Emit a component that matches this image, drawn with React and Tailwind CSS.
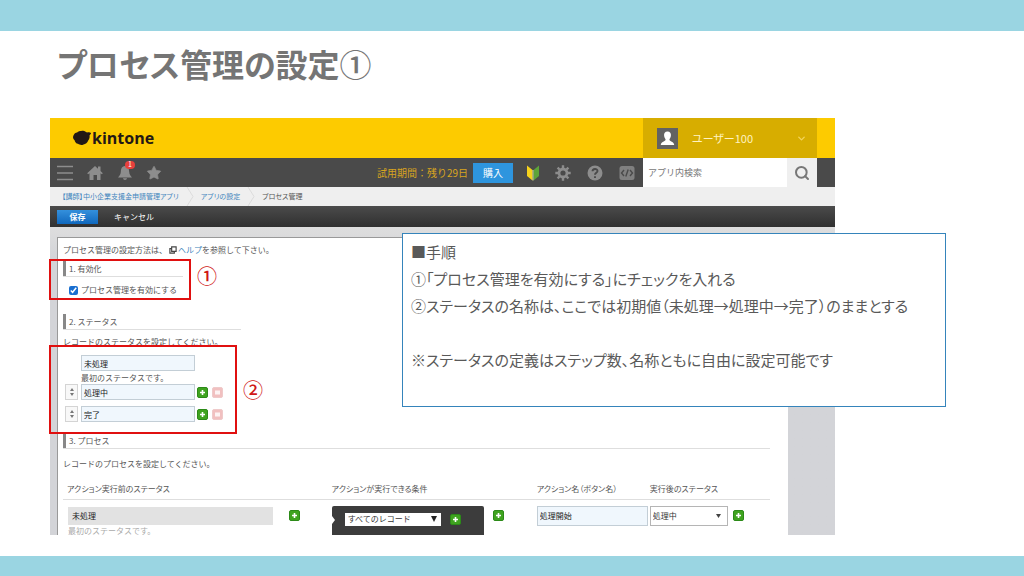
import React from "react";
import { Star, Settings, Search, ChevronDown } from "lucide-react";

function KintoneMark() {
  return (
    <svg viewBox="0 0 20 16" className="h-4 w-5" fill="#231815" aria-hidden="true">
      <path d="M2 4.500C3 2.500 5 3 6 1.800C7.500 .4 9 1.200 10.500 .8C12.500 .3 13.500 2 15 2.600C16.500 2 18 2 19 3C19.300 4.200 17.800 4.600 17.500 5.500C18 7.500 17.200 9 16.200 10.600C15.500 13 13.500 14 11.500 14.500C9.500 15.500 7.500 14.900 6 13.800C4 13.500 3 11.900 2.600 10.200C.6 9 .6 6.200 2 4.500Z" />
    </svg>
  );
}

function PlusIcon() {
  return (
    <svg viewBox="0 0 11 11" className="block h-[11px] w-[11px]" aria-hidden="true">
      <rect x=".5" y=".5" width="10" height="10" rx="1.500" fill="#3fa31f" stroke="#2c8a18" />
      <path d="M5.500 3v5M3 5.500h5" stroke="#fff" strokeWidth="1.600" />
    </svg>
  );
}

function AddButton() {
  return (
    <button type="button" aria-label="追加" className="shrink-0">
      <PlusIcon />
    </button>
  );
}

function RemoveButton() {
  return (
    <button type="button" aria-label="削除" className="shrink-0">
      <svg viewBox="0 0 11 11" className="block h-[11px] w-[11px]" aria-hidden="true">
        <rect x=".5" y=".5" width="10" height="10" rx="1.500" fill="#f1c0c0" stroke="#efcaca" />
        <rect x="3" y="3.500" width="5" height="4" fill="#fdf3f3" />
      </svg>
    </button>
  );
}

function SortHandle() {
  return (
    <button
      type="button"
      aria-label="並べ替え"
      className="flex h-4 w-[13px] shrink-0 items-center justify-center border border-[#d4d4d4] bg-[#f8f8f8]"
    >
      <svg viewBox="0 0 6 10" className="h-[10px] w-[6px]" fill="#777" aria-hidden="true">
        <path d="M3 1L5 4H1ZM3 9L5 6H1Z" />
      </svg>
    </button>
  );
}

function TextField({ label, value, className }) {
  return (
    <input
      type="text"
      aria-label={label}
      defaultValue={value}
      className={`border border-[#c3ced6] bg-[#f0f7fd] px-[2px] text-[8px] text-[#222] outline-none ${className}`}
    />
  );
}

function SectionTitle({ children, className }) {
  return (
    <h2 className={`h-4 border-b border-[#dedede] ${className}`}>
      <span className="flex h-[15px] items-center border-l-[3px] border-[#888] pl-[3px]">{children}</span>
    </h2>
  );
}

function TopBar() {
  return (
    <header className="flex h-10 bg-[#fdcb00] pr-[18px]">
      <a href="#home" className="flex items-center pl-[22px] text-[#231815]">
        <KintoneMark />
        <span className="font-['Open_Sans',sans-serif] text-[16px] leading-5 font-bold">kintone</span>
      </a>
      <button type="button" className="ml-auto flex w-[174px] items-center bg-[#d7ad00] pl-[14px] text-[11px] text-[#fff3c0]">
        <span className="h-[21px] w-[21px] bg-[#626262]">
          <svg viewBox="0 0 21 21" fill="#fff" aria-hidden="true">
            <path d="M10.500 3.500C13 3.500 14.200 5.200 13.900 7.800C13.700 9.700 12.700 10.700 12.400 11.500C12.400 13.500 17.200 13.700 17.200 17H3.800C3.800 13.700 8.600 13.500 8.600 11.500C8.300 10.700 7.300 9.700 7.100 7.800C6.800 5.200 8 3.500 10.500 3.500Z" />
          </svg>
        </span>
        <span className="ml-[14px] [font-feature-settings:'palt']">ユーザー100</span>
        <ChevronDown className="mr-[10px] ml-auto h-[11px] w-[11px] text-[#f3d45a]" strokeWidth={3} />
      </button>
    </header>
  );
}

function NavBar() {
  return (
    <nav className="flex h-[29px] items-center bg-[#4a4a4a] pr-[18px] text-[#8d8d8d]">
      <button type="button" aria-label="メニュー" className="ml-[7px]">
        <svg viewBox="0 0 16 16" className="h-4 w-4" stroke="currentColor" strokeWidth="1.600" aria-hidden="true">
          <path d="M0 1.500h16M0 8h16M0 14.500h16" />
        </svg>
      </button>
      <a href="#portal" aria-label="ホーム" className="ml-[14px]">
        <svg viewBox="0 0 16 16" className="h-4 w-4" fill="currentColor" aria-hidden="true">
          <path d="M8 1L11 3.800V1.500H13.500V6L15.800 8.200L14.800 9.200L13.500 8.200V15H10V10H6.500V15H2.500V8.200L1.200 9.200L.2 8.200Z" />
        </svg>
      </a>
      <button type="button" aria-label="通知" className="relative ml-[14px]">
        <svg viewBox="0 0 16 16" className="h-4 w-4" fill="currentColor" aria-hidden="true">
          <path d="M8 1C11.500 1.500 12 4 12.200 7C12.400 9.500 13.500 10.500 15 12.500H1C2.500 10.500 3.600 9.500 3.800 7C4 4 4.500 1.500 8 1ZM6 13.200H10C9.700 15.500 6.300 15.500 6 13.200Z" />
        </svg>
        <span className="absolute -top-1 left-2 flex h-2 w-[10px] items-center justify-center rounded-full bg-[#e8403c] text-[7px] leading-none text-white">
          1
        </span>
      </button>
      <button type="button" aria-label="お気に入り" className="ml-[13px]">
        <Star className="h-4 w-4" fill="currentColor" strokeWidth={1} />
      </button>
      <span className="ml-auto text-[10px] whitespace-nowrap text-[#d9a520]">試用期間：残り29日</span>
      <button type="button" className="ml-[5px] h-5 w-10 bg-[#2e95de] text-[10px] text-white">
        購入
      </button>
      <svg viewBox="0 0 14 16" className="ml-[13px] h-4 w-[14px] shrink-0" aria-hidden="true">
        <path d="M1 .5L6.500 5V15.500L1 11Z" fill="#f6d21c" />
        <path d="M13 .5L7.500 5V15.500L13 11Z" fill="#5da33a" />
        <path d="M7 5V15.500" stroke="#e9efc8" strokeWidth=".8" />
      </svg>
      <button type="button" aria-label="設定" className="ml-[15px] shrink-0">
        <svg viewBox="0 0 16 16" className="h-4 w-4" fill="none" stroke="currentColor" aria-hidden="true">
          <circle cx="8" cy="8" r="4" strokeWidth="2.800" />
          <path d="M8 .3V3M8 13V15.700M.3 8H3M13 8H15.700M2.600 2.600L4.500 4.500M11.500 11.500L13.400 13.400M2.600 13.400L4.500 11.500M11.500 4.500L13.400 2.600" strokeWidth="2.400" />
        </svg>
      </button>
      <button type="button" aria-label="ヘルプ" className="ml-4 shrink-0">
        <svg viewBox="0 0 16 16" className="h-4 w-4" aria-hidden="true">
          <circle cx="8" cy="8" r="7.500" fill="currentColor" />
          <path d="M5.500 6.300C5.500 3.200 10.500 3.200 10.500 6C10.500 7.800 8 7.900 8 9.800M8 11.200V13" fill="none" stroke="#4a4a4a" strokeWidth="1.900" />
        </svg>
      </button>
      <button type="button" aria-label="開発者情報" className="mr-2 ml-4 shrink-0">
        <svg viewBox="0 0 16 16" className="h-4 w-4" aria-hidden="true">
          <rect x=".5" y="1" width="15" height="14" rx="2.500" fill="#808080" />
          <path d="M5 5L2.500 8L5 11M11 5L13.500 8L11 11M9.200 4.500L6.800 11.500" fill="none" stroke="#4a4a4a" strokeWidth="1.400" />
        </svg>
      </button>
      <form className="flex h-full w-[174px] shrink-0" onSubmit={(e) => e.preventDefault()}>
        <input
          type="text"
          aria-label="アプリ内検索"
          placeholder="アプリ内検索"
          className="w-[144px] bg-white px-[5px] text-[9px] outline-none placeholder:text-[#777]"
        />
        <button type="submit" aria-label="検索" className="flex flex-1 items-center justify-center bg-[#efefef]">
          <Search className="h-4 w-4 text-[#777]" strokeWidth={3} />
        </button>
      </form>
    </nav>
  );
}

function CrumbArrow() {
  return (
    <svg viewBox="0 0 8 19" className="mx-[7px] h-[19px] w-2 shrink-0" aria-hidden="true">
      <path d="M1 0L7 9.500L1 19" fill="none" stroke="#dcdcdc" />
    </svg>
  );
}

function Breadcrumbs() {
  return (
    <div className="flex h-[19px] items-center bg-[#efefef] pl-[12px] text-[7px] whitespace-nowrap [font-feature-settings:'palt']">
      <a href="#app" className="text-[#4285bd]">【講師】中小企業支援金申請管理アプリ</a>
      <CrumbArrow />
      <a href="#settings" className="text-[#4285bd]">アプリの設定</a>
      <CrumbArrow />
      <span className="text-[#555]">プロセス管理</span>
    </div>
  );
}

function ActionBar() {
  return (
    <div className="flex h-[21px] items-center gap-4 bg-linear-to-b from-[#4b4b4b] to-[#303030] pl-[7px] text-white">
      <button type="button" className="h-[14px] w-[41px] bg-linear-to-b from-[#3490dc] to-[#0f68bd] text-[8px] leading-none font-bold">
        保存
      </button>
      <button type="button" className="text-[8px]">キャンセル</button>
    </div>
  );
}

function StatusSection() {
  return (
    <section>
      <SectionTitle className="w-[178px]">2. ステータス</SectionTitle>
      <p className="mt-1 leading-4">レコードのステータスを設定してください。</p>
      <div className="mt-[5px] pl-[18px]">
        <TextField label="最初のステータス" value="未処理" className="block h-4 w-[114px]" />
        <p className="h-[13px] leading-[13px]">最初のステータスです。</p>
      </div>
      <ul className="flex flex-col gap-[6px] pl-[2px]">
        {["処理中", "完了"].map((name) => (
          <li key={name} className="flex items-center">
            <SortHandle />
            <TextField label="ステータス名" value={name} className="mr-[2px] ml-[3px] h-4 w-[114px]" />
            <AddButton />
            <span className="w-1" />
            <RemoveButton />
          </li>
        ))}
      </ul>
    </section>
  );
}

function ProcessSection() {
  return (
    <section className="mt-[11px] mr-[18px]">
      <SectionTitle>3. プロセス</SectionTitle>
      <p className="mt-[7px] leading-4">レコードのプロセスを設定してください。</p>
      <table className="mt-[7px] w-full table-fixed border-collapse text-left">
        <thead>
          <tr className="h-5 border-b border-[#dedede] [font-feature-settings:'palt']">
            <th className="w-[38%] pl-1 font-normal">アクション実行前のステータス</th>
            <th className="w-[29%] font-normal">アクションが実行できる条件</th>
            <th className="w-[16%] font-normal">アクション名（ボタン名）</th>
            <th className="font-normal">実行後のステータス</th>
          </tr>
        </thead>
        <tbody>
          <tr className="align-top">
            <td className="pt-[7px] pl-[5px]">
              <div className="flex items-center">
                <span className="flex h-[18px] w-[205px] items-center bg-[#e2e2e2] pl-1 text-[#222]">未処理</span>
                <span className="w-4" />
                <AddButton />
              </div>
              <p className="pt-[2px] leading-[8px] text-[#aaa]">最初のステータスです。</p>
            </td>
            <td className="pt-[6px]">
              <div className="flex items-start gap-[9px]">
                <div className="flex h-[29px] w-[152px] items-start gap-[9px] rounded-t-[2px] bg-[#3c3c3c] pt-[7px]">
                  <svg viewBox="0 0 4 8" className="mt-[3px] h-2 w-1" fill="#fff" aria-hidden="true">
                    <path d="M0 0L3 4L0 8Z" />
                  </svg>
                  <span className="flex h-[13px] w-[96px] items-center bg-white pr-1">
                    <select aria-label="実行できる条件" defaultValue="all" className="min-w-0 flex-1 appearance-none bg-transparent pl-[3px] text-[8px] leading-3 text-[#333]">
                      <option value="all">すべてのレコード</option>
                    </select>
                    <svg viewBox="0 0 6 6" className="h-[6px] w-[6px]" fill="#222" aria-hidden="true">
                      <path d="M0 0H6L3 6Z" />
                    </svg>
                  </span>
                  <span className="pt-[1px]">
                    <AddButton />
                  </span>
                </div>
                <span className="pt-1">
                  <AddButton />
                </span>
              </div>
            </td>
            <td className="pt-[6px]">
              <TextField label="アクション名" value="処理開始" className="block h-5 w-[111px]" />
            </td>
            <td className="pt-[6px]">
              <div className="flex items-center gap-[5px]">
                <span className="flex h-5 w-[78px] items-center border border-[#b5b5b5] bg-white pr-[6px]">
                  <select aria-label="実行後のステータス" defaultValue="doing" className="min-w-0 flex-1 appearance-none bg-transparent pl-[2px] text-[8px] leading-4 text-[#333]">
                    <option value="doing">処理中</option>
                    <option value="done">完了</option>
                  </select>
                  <svg viewBox="0 0 5 4" className="h-1 w-[5px]" fill="#444" aria-hidden="true">
                    <path d="M0 0H5L2.500 4Z" />
                  </svg>
                </span>
                <AddButton />
              </div>
            </td>
          </tr>
        </tbody>
      </table>
    </section>
  );
}

function KintoneScreen() {
  return (
    <div>
      <TopBar />
      <NavBar />
      <Breadcrumbs />
      <ActionBar />
      <div className="bg-[#d3d4d8] bg-linear-to-b from-[#dedede] to-[#d3d4d8] to-10% pt-[10px] pr-[47px] pl-[7px]">
        <main className="border-t border-l border-[#999] bg-white pl-[5px] text-[8px] text-[#555]">
          <p className="flex h-[23px] items-center whitespace-nowrap">
            プロセス管理の設定方法は、
            <svg viewBox="0 0 9 9" className="mr-[1px] ml-[2px] h-2 w-2" fill="none" stroke="#444" strokeWidth="1.300" aria-hidden="true">
              <path d="M3 1H8V6H3ZM3 3H1V8H6V6" />
            </svg>
            <a href="#help" className="text-[#4285bd]">ヘルプ</a>
            を参照して下さい。
          </p>
          <SectionTitle className="w-[120px]">1. 有効化</SectionTitle>
          <label className="mt-[6px] mb-[17px] ml-[6px] flex h-[14px] w-fit items-center gap-[3px] whitespace-nowrap">
            <input type="checkbox" defaultChecked className="h-[9px] w-[9px] accent-[#1a6fd0]" />
            プロセス管理を有効にする
          </label>
          <StatusSection />
          <ProcessSection />
        </main>
      </div>
    </div>
  );
}

function Callout() {
  return (
    <aside className="absolute top-[115px] left-[352px] w-[544px] border border-[#3584bb] bg-white pt-1 pb-[33px] pl-2 text-[15px] leading-[27px] whitespace-nowrap text-[#595959] [font-feature-settings:'palt']">
      <p>■手順</p>
      <p>①「プロセス管理を有効にする」にチェックを入れる</p>
      <p>②ステータスの名称は、ここでは初期値（未処理→処理中→完了）のままとする</p>
      <p className="mt-[27px]">※ステータスの定義はステップ数、名称ともに自由に設定可能です</p>
    </aside>
  );
}

export default function App() {
  return (
    <div lang="ja" className="flex min-h-screen flex-col bg-white font-['Noto_Sans_CJK_JP',sans-serif]">
      <div className="h-[31px] bg-[#9ad5e2]" />
      <h1 className="mt-2 pl-[57px] text-[32px] leading-[48px] font-bold whitespace-nowrap text-[#757575] [font-feature-settings:'palt']">
        プロセス管理の設定<span className="font-medium">①</span>
      </h1>
      <div className="relative mt-[31px] mr-[189px] mb-5 ml-[50px]">
        <KintoneScreen />
        <div className="absolute top-[141px] -left-[1px] h-[41px] w-[142px] border-2 border-[#e01010]" />
        <span className="absolute top-[146px] left-[147px] text-[20px] leading-6 font-medium text-[#d01818]">①</span>
        <div className="absolute top-[227px] -left-[1px] h-[89px] w-[188px] border-2 border-[#e01010]" />
        <span className="absolute top-[260px] left-[193px] text-[20px] leading-6 font-medium text-[#d01818]">②</span>
        <Callout />
      </div>
      <div className="mt-auto h-5 bg-[#9ad5e2]" />
    </div>
  );
}
